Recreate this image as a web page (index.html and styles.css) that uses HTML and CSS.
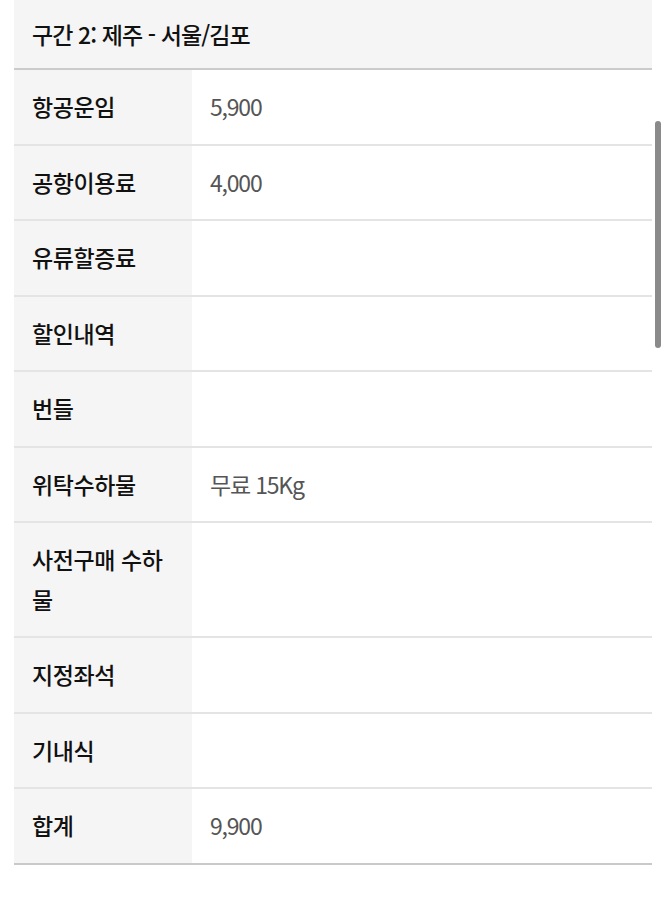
FILE: index.html
```html
<!DOCTYPE html>
<html lang="ko">
<head>
<meta charset="utf-8">
<link rel="stylesheet" href="styles.css">
</head>
<body>
<div class="sheet">
  <div class="head">구간 2: 제주 - 서울/김포</div>
  <div class="row"><div class="label">항공운임</div><div class="value">5,900</div></div>
  <div class="row"><div class="label">공항이용료</div><div class="value">4,000</div></div>
  <div class="row"><div class="label">유류할증료</div><div class="value"></div></div>
  <div class="row"><div class="label">할인내역</div><div class="value"></div></div>
  <div class="row"><div class="label">번들</div><div class="value"></div></div>
  <div class="row"><div class="label">위탁수하물</div><div class="value">무료 15Kg</div></div>
  <div class="row"><div class="label">사전구매 수하물</div><div class="value"></div></div>
  <div class="row"><div class="label">지정좌석</div><div class="value"></div></div>
  <div class="row"><div class="label">기내식</div><div class="value"></div></div>
  <div class="row last"><div class="label">합계</div><div class="value">9,900</div></div>
</div>
<div class="scrollbar"></div>
</body>
</html>
```

FILE: styles.css
```css
html, body {
  margin: 0;
  padding: 0;
  background: #ffffff;
}
body {
  font-family: "Noto Sans CJK KR", "Noto Sans", sans-serif;
  color: #111;
  position: relative;
  min-height: 908px;
}
.sheet {
  margin: 0 14px;
  display: flex;
  flex-direction: column;
}
.head {
  background: #f5f5f5;
  padding: 15px 18px;
  height: 38px;
  line-height: 38px;
  font-size: 23px;
  font-weight: 500;
  letter-spacing: -0.9px;
  border-bottom: 2px solid #cbcbcb;
}
.row {
  display: flex;
  border-bottom: 2px solid #e4e4e4;
}
.row.last {
  border-bottom-color: #c9c9c9;
}
.label {
  width: 178px;
  flex: none;
  box-sizing: border-box;
  background: #f5f5f5;
  padding: 17px 18px;
  line-height: 39.5px;
  font-size: 23px;
  font-weight: 500;
  letter-spacing: -0.4px;
}
.value {
  flex: 1;
  padding: 17px 18px;
  line-height: 39.5px;
  font-size: 23px;
  font-weight: 400;
  color: #555;
  letter-spacing: -1.2px;
}
.scrollbar {
  position: absolute;
  left: 655px;
  top: 121px;
  width: 6px;
  height: 227px;
  border-radius: 3px;
  background: #8a8a8a;
}
```
